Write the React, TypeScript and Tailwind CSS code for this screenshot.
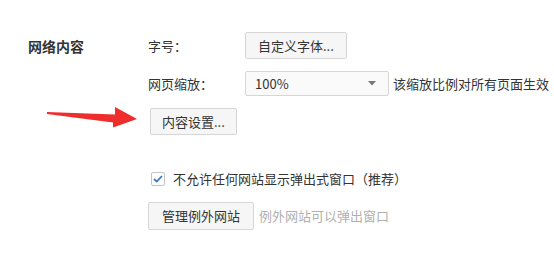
const font = { fontFamily: '"Noto Sans CJK SC", "Liberation Sans", sans-serif' };

const Button = ({ label, className = "" }: { label: string; className?: string }) => (
  <button
    className={`flex items-center rounded-[2px] border border-[#d6d6d6] bg-[#f6f6f6] text-[13px] leading-none text-[#333] ${className}`}
  >
    {label}
  </button>
);

export default function App() {
  return (
    <div className="relative h-[254px] w-[554px] overflow-hidden bg-white text-[13px] text-[#333]" style={font}>
      <div className="flex pl-[28px] pt-[32px]">
        <div className="w-[120px] pt-[5px] text-[14px] font-bold leading-[18px] text-[#333]">网络内容</div>

        <div className="flex flex-col">
          <div className="flex items-center">
            <span className="w-[97px] pl-[-1px]">字号：</span>
            <Button label="自定义字体..." className="h-[27px] px-[12px]" />
          </div>

          <div className="mt-[12px] flex items-center">
            <span className="w-[97px]">网页缩放：</span>
            <div className="flex h-[25px] w-[144px] items-center justify-between rounded-[2px] border border-[#d6d6d6] bg-[#fafafa] pl-[9px] pr-[12px]">
              <span className="text-[13px] text-[#333]">100%</span>
              <svg width="8" height="5" viewBox="0 0 8 5">
                <path d="M0 0 L8 0 L4 4.5 Z" fill="#777" />
              </svg>
            </div>
            <span className="ml-[4px] whitespace-nowrap">该缩放比例对所有页面生效</span>
          </div>

          <div className="mt-[12px] flex">
            <Button label="内容设置..." className="ml-[2px] h-[27px] px-[11px]" />
          </div>

          <div className="mt-[34px] flex items-center">
            <span className="ml-[3px] flex h-[14px] w-[14px] items-center justify-center rounded-[2px] border border-[#c4c4c4] bg-white">
              <svg width="10" height="8" viewBox="0 0 10 8">
                <path d="M1 4 L3.8 6.6 L9 1" fill="none" stroke="#3b78c4" strokeWidth="1.8" />
              </svg>
            </span>
            <span className="ml-[8px] whitespace-nowrap">不允许任何网站显示弹出式窗口（推荐）</span>
          </div>

          <div className="mt-[13px] flex items-center">
            <Button label="管理例外网站" className="h-[28px] px-[13px]" />
            <span className="ml-[5px] whitespace-nowrap text-[#b0b0b0]">例外网站可以弹出窗口</span>
          </div>
        </div>
      </div>

      <svg className="absolute left-0 top-0" width="554" height="254" viewBox="0 0 554 254">
        <polygon points="47,112 115,114.5 115,107 137,119 113,127.5 113,122.5 47,114" fill="#ef2d2d" />
      </svg>
    </div>
  );
}
